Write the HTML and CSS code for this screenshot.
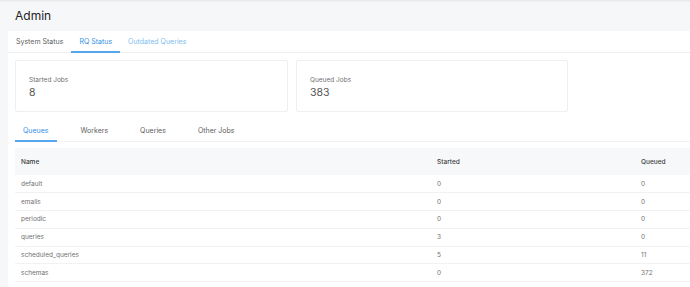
FILE: index.html
```html
<!DOCTYPE html>
<html lang="en">
<head>
    <meta charset="UTF-8">
    <title>Admin</title>
    <link rel="stylesheet" href="styles.css">
</head>
<body>
    <div class="page-header">
        <h1 class="page-title">Admin</h1>
    </div>

    <div class="panel">
        <!-- Top tabs -->
        <div class="tabs">
            <a class="tab">System Status</a>
            <a class="tab active">RQ Status</a>
            <a class="tab link">Outdated Queries</a>
        </div>

        <div class="panel-body">
            <!-- Counters -->
            <div class="cards">
                <div class="card">
                    <div class="card-label">Started Jobs</div>
                    <div class="card-value">8</div>
                </div>
                <div class="card">
                    <div class="card-label">Queued Jobs</div>
                    <div class="card-value">383</div>
                </div>
            </div>

            <!-- Inner tabs -->
            <div class="subtabs">
                <a class="subtab active">Queues</a>
                <a class="subtab">Workers</a>
                <a class="subtab">Queries</a>
                <a class="subtab">Other Jobs</a>
            </div>

            <table class="queues">
                <thead>
                    <tr>
                        <th class="col-name">Name</th>
                        <th class="col-started">Started</th>
                        <th>Queued</th>
                    </tr>
                </thead>
                <tbody>
                    <tr><td>default</td><td>0</td><td>0</td></tr>
                    <tr><td>emails</td><td>0</td><td>0</td></tr>
                    <tr><td>periodic</td><td>0</td><td>0</td></tr>
                    <tr><td>queries</td><td>3</td><td>0</td></tr>
                    <tr><td>scheduled_queries</td><td>5</td><td>11</td></tr>
                    <tr><td>schemas</td><td>0</td><td>372</td></tr>
                </tbody>
            </table>
        </div>
    </div>
</body>
</html>
```

FILE: styles.css
```css
* {
    margin: 0;
    padding: 0;
    box-sizing: border-box;
    font-family: Inter, "Noto Sans", sans-serif;
}

body {
    background-color: #f6f7f9;
    overflow: hidden;
    width: 690px;
    height: 287px;
    box-shadow: inset 0 2px 2px -1px rgba(0, 0, 0, 0.08);
    -webkit-font-smoothing: antialiased;
}

/* Cabecera */
.page-header {
    height: 31px;
    display: flex;
    align-items: center;
    padding-left: 15px;
}

.page-title {
    font-size: 12px;
    font-weight: 400;
    color: #222;
}

/* Panel blanco */
.panel {
    margin-left: 8px;
    height: 256px;
    background-color: white;
    overflow: hidden;
    transform: translateZ(0);
}

.tabs {
    display: flex;
    height: 22px;
    border-bottom: 1px solid #eeeeee;
}

.tab {
    display: flex;
    align-items: center;
    padding: 0 8px;
    font-size: 7px;
    color: #606060;
    border-bottom: 2px solid transparent;
    margin-bottom: -1px;
}

.tab.active {
    color: #3391e8;
    border-bottom-color: #55a6ec;
}

.tab.link {
    color: #82bcf0;
}

.panel-body {
    padding: 7px 0 0 7px;
}

/* Tarjetas */
.cards {
    display: grid;
    grid-template-columns: 273px 272px;
    gap: 8px;
}

.card {
    height: 52px;
    border: 1px solid #efefef;
    border-radius: 2px;
    padding: 15px 13px 0;
}

.card-label {
    font-size: 6.5px;
    color: #707070;
}

.card-value {
    margin-top: 2px;
    font-size: 10.5px;
    color: #555;
}

/* Sub pestañas */
.subtabs {
    display: flex;
    height: 22px;
    margin-top: 8px;
    border-bottom: 1px solid #f2f2f2;
}

.subtab {
    display: flex;
    align-items: center;
    padding: 1px 8px 0;
    margin-right: 16px;
    font-size: 7px;
    color: #606060;
    border-bottom: 2px solid transparent;
    margin-bottom: -1px;
}

.subtab.active {
    color: #3391e8;
    border-bottom-color: #55a6ec;
}

/* Tabla */
.queues {
    margin-top: 6px;
    width: 675px;
    border-collapse: collapse;
    font-size: 6.5px;
    color: #707070;
}

.queues th {
    height: 27px;
    background-color: #f7f8fa;
    font-weight: 500;
    color: #3a3a3a;
    text-align: left;
    padding: 0 6px;
}

.col-name {
    width: 416px;
}

.col-started {
    width: 204px;
}

.queues td {
    height: 17.75px;
    padding: 0 6px;
    border-bottom: 1px solid #f2f2f2;
}
```
